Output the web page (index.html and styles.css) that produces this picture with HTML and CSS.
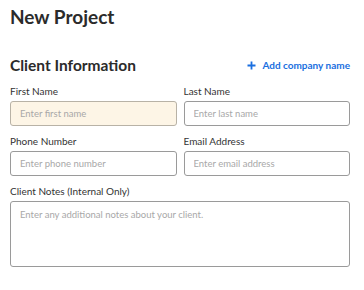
FILE: index.html
```html
<!DOCTYPE html>
<html lang="en">
<head>
    <meta charset="UTF-8">
    <meta name="viewport" content="width=device-width, initial-scale=1.0">
    <title>New Project</title>
    <link rel="stylesheet" href="styles.css">
</head>
<body>

<div class="page">
    <h1 class="page-title">New Project</h1>

    <div class="section-head">
        <h2 class="section-title">Client Information</h2>
        <a href="#" class="add-link">
            <svg class="add-icon" width="9" height="9" viewBox="0 0 9 9"><path d="M4.5 0.5v8M0.5 4.5h8" stroke="currentColor" stroke-width="1.8"/></svg>
            Add company name
        </a>
    </div>

    <div class="form-grid">
        <div class="field">
            <label class="field-label">First Name</label>
            <input type="text" class="field-input is-active" placeholder="Enter first name">
        </div>
        <div class="field">
            <label class="field-label">Last Name</label>
            <input type="text" class="field-input" placeholder="Enter last name">
        </div>
        <div class="field">
            <label class="field-label">Phone Number</label>
            <input type="text" class="field-input" placeholder="Enter phone number">
        </div>
        <div class="field">
            <label class="field-label">Email Address</label>
            <input type="text" class="field-input" placeholder="Enter email address">
        </div>
        <div class="field field-wide">
            <label class="field-label">Client Notes (Internal Only)</label>
            <textarea class="field-input field-notes" placeholder="Enter any additional notes about your client."></textarea>
        </div>
    </div>
</div>

</body>
</html>
```

FILE: styles.css
```css
body {
    margin: 0;
    padding: 0;
    background-color: #fff;
    color: #2b2b2b;
    font-family: Lato, "Noto Sans", sans-serif;
}
.page {
    padding: 5px 14px 0 10px;
}
.page-title {
    margin: 0;
    font-size: 19px;
    font-weight: 700;
    line-height: 24px;
    color: #2b2b2b;
}
.section-head {
    display: flex;
    justify-content: space-between;
    align-items: center;
    margin-top: 26px;
}
.section-title {
    margin: 0;
    font-size: 15.5px;
    font-weight: 700;
    line-height: 20px;
}
.add-link {
    display: flex;
    align-items: center;
    gap: 6px;
    color: #1a6fe0;
    font-size: 10px;
    font-weight: 700;
    text-decoration: none;
}
.form-grid {
    display: grid;
    grid-template-columns: 1fr 1fr;
    column-gap: 7px;
    row-gap: 9px;
    margin-top: 10px;
}
.field-wide {
    grid-column: 1 / 3;
}
.field-label {
    display: block;
    font-size: 10px;
    line-height: 12px;
    margin-bottom: 4px;
    color: #333;
}
.field-input {
    display: block;
    box-sizing: border-box;
    width: 100%;
    height: 25px;
    margin: 0;
    padding: 0 9px;
    border: 1px solid #9a9a9a;
    border-radius: 3px;
    font-family: inherit;
    font-size: 9.5px;
    color: #333;
    background-color: #fff;
    outline: none;
}
.field-input::placeholder {
    color: #a8a8a8;
}
.field-input.is-active {
    background-color: #fdf5e6;
    border-color: #b8b2a6;
}
.field-notes {
    height: 66px;
    padding: 7px 9px;
    resize: none;
}
```
